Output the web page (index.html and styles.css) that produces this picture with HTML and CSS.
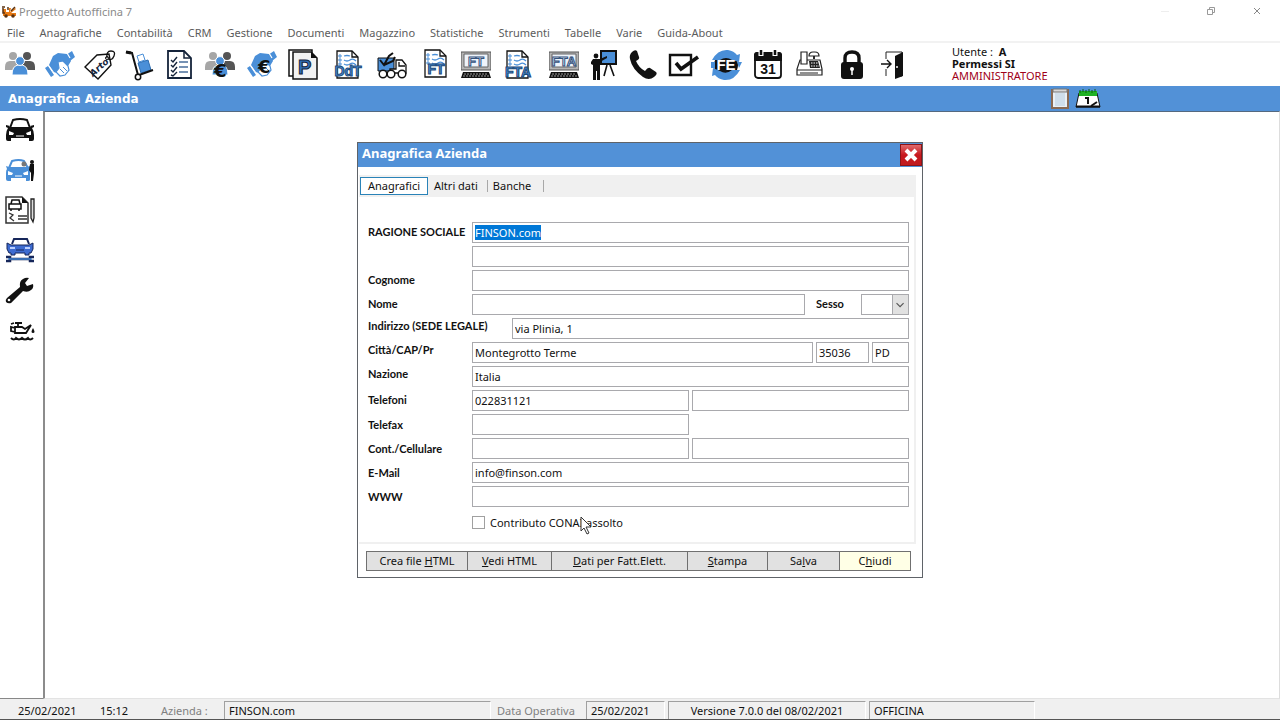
FILE: index.html
```html
<!DOCTYPE html>
<html lang="it">
<head>
    <meta charset="UTF-8">
    <title>Progetto Autofficina 7</title>
    <link rel="stylesheet" href="styles.css">
</head>
<body>

    <!-- Simboli usati da piu' icone -->
    <svg class="simboli" aria-hidden="true">
        <symbol id="persone" viewBox="0 0 30 30">
            <circle cx="8" cy="6" r="4" fill="#a6a6a6"/>
            <path d="M0 20v-3q0-6 5-6h5q3 0 3 4v5z" fill="#a6a6a6"/>
            <circle cx="22" cy="6" r="4" fill="#555"/>
            <path d="M30 20v-3q0-6-5-6h-5q-3 0-3 4v5z" fill="#555"/>
            <path d="M7 25q0-9 6-10h4q6 1 6 10z" fill="#4a8fd8" stroke="#fff"/>
            <circle cx="15" cy="11" r="4.4" fill="#4a8fd8" stroke="#fff"/>
        </symbol>
        <symbol id="mani" viewBox="0 0 30 30">
            <path d="M0 18l3-2 6 9-3 2zM21 5l6-4 3 6-5 4z" fill="#4a8fd8"/>
            <path d="M4 15l4-9 5-3 9 1 4 7-3 5v4l-3 4-4 1-3-2-5-1z" fill="#4a8fd8"/>
            <path d="M13 12l5-1 5 5 1 4-4 5-5 1-4-4 3-4z" fill="#fff" stroke="#4a8fd8" stroke-width="1.2"/>
            <path d="M15 19l4 5M18 17l4 5M22 3l3 5M4 16l5 7" fill="none" stroke="#fff" stroke-width="1.2"/>
            <path d="M15 19l4 4M18 17l4 4" stroke="#4a8fd8"/>
        </symbol>
        <symbol id="foglio" viewBox="0 0 30 30">
            <path d="M4 1h15l6 6v21H4z" fill="#fff" stroke="#111" stroke-width="1.3"/>
            <path d="M19 1v6h6" fill="none" stroke="#111" stroke-width="1.3"/>
            <path d="M6 5h2v2H6zM6 9h2v2H6zM6 13h2v2H6z" fill="none" stroke="#4a8fd8"/>
            <path d="M11 6q3-1 6 0M11 10q3 2 6 0t6 1M11 14q3 2 6 0t6 1" fill="none" stroke="#4a8fd8" stroke-width="1.3"/>
        </symbol>
        <symbol id="computer" viewBox="0 0 30 30">
            <path d="M0 2h30v18H0z" fill="#b4b4b4" stroke="#555"/>
            <path d="M3 4h24v13H3z" fill="#eef3fa" stroke="#666"/>
            <path d="M2 22h26l2 6H0z" fill="#111"/>
            <path d="M3 24h24M2 26h26" stroke="#999" stroke-dasharray="2 1"/>
        </symbol>
    </svg>

    <header class="titolo-app">
        <svg class="logo" viewBox="0 0 15 12">
            <path d="M1 3h3v3h3V2h2l-1 4 5-4 1 1-5 4h5v3H1z" fill="#e87a14"/>
            <path d="M0 1h3M1 2v5h2M9 5l4-4M6 1v3" fill="none" stroke="#5b3310" stroke-width="1.5"/>
            <circle cx="4" cy="10" r="1.8" fill="#5b3310"/><circle cx="11" cy="10" r="1.8" fill="#5b3310"/>
        </svg>
        <span>Progetto Autofficina 7</span>
        <div class="controlli">
            <button type="button" aria-label="Riduci"><svg viewBox="0 0 10 10"><path d="M1 5.500h8" stroke="#eee"/></svg></button>
            <button type="button" aria-label="Ripristina"><svg viewBox="0 0 10 10"><path d="M1.500 3.500h5v5h-5zM3.500 3V1.500h5v5H7" fill="none" stroke="#999"/></svg></button>
            <button type="button" aria-label="Chiudi programma"><svg viewBox="0 0 10 10"><path d="M2 2l6 6M8 2L2 8" stroke="#888"/></svg></button>
        </div>
    </header>

    <nav class="menu">
        <a href="#">File</a>
        <a href="#">Anagrafiche</a>
        <a href="#">Contabilità</a>
        <a href="#">CRM</a>
        <a href="#">Gestione</a>
        <a href="#">Documenti</a>
        <a href="#">Magazzino</a>
        <a href="#">Statistiche</a>
        <a href="#">Strumenti</a>
        <a href="#">Tabelle</a>
        <a href="#">Varie</a>
        <a href="#">Guida-About</a>
    </nav>

    <div class="barra">
        <button type="button" aria-label="Clienti"><svg viewBox="0 0 30 30"><use href="#persone" width="30" height="30"/></svg></button>
        <button type="button" aria-label="Fornitori"><svg viewBox="0 0 30 30"><use href="#mani" width="30" height="30"/></svg></button>
        <button type="button" aria-label="Articoli"><svg viewBox="0 0 30 30">
            <path d="M0 17L12 5l12-1 2 11-13 14z" fill="#fff" stroke="#111" stroke-width="1.4"/>
            <circle cx="22" cy="8" r="1.5" fill="#fff" stroke="#111"/>
            <path d="M22 8q-1-7 4-7t3 5-6 3" fill="none" stroke="#111" stroke-width="1.3"/>
            <text x="3" y="22" transform="rotate(-42 12 18)" class="scritta-tag">Arto</text>
        </svg></button>
        <button type="button" aria-label="Magazzino"><svg viewBox="0 0 30 30">
            <path d="M13 13l10-3 3 10-10 3z" fill="#4a8fd8" stroke="#2c6cb0"/>
            <path d="M12 6l6-2 2 6-6 2z" fill="#fff" stroke="#4a8fd8"/>
            <path d="M1 2l6 1 6 22M14 25l14-5" fill="none" stroke="#111" stroke-width="2"/>
            <path d="M1 2l5 1" stroke="#111" stroke-width="3"/>
            <circle cx="13" cy="27" r="2.700" fill="#fff" stroke="#111" stroke-width="1.500"/>
        </svg></button>
        <button type="button" aria-label="Elenco"><svg viewBox="0 0 30 30">
            <path d="M3 1h16l7 7v20H3z" fill="#fff" stroke="#14233a" stroke-width="1.800"/>
            <path d="M19 1v7h7" fill="none" stroke="#14233a" stroke-width="1.500"/>
            <path d="M6 10l2 2 4-5M6 15l2 2 4-5M6 20l2 2 4-5M6 25l2 1 4-4" fill="none" stroke="#14233a" stroke-width="1.400"/>
            <path d="M14 12h9M14 17h9M14 22h9" stroke="#4a6f9c" stroke-width="1.500"/>
        </svg></button>
        <button type="button" aria-label="Incassi clienti"><svg viewBox="0 0 30 30"><use href="#persone" width="30" height="30"/><circle cx="16" cy="21" r="6" fill="#4a8fd8"/><text x="9" y="27" class="euro">€</text></svg></button>
        <button type="button" class="dist-s" aria-label="Pagamenti fornitori"><svg viewBox="0 0 30 30"><use href="#mani" width="30" height="30"/><text x="11" y="23" class="euro">€</text></svg></button>
        <button type="button" class="dist-s" aria-label="Preventivi"><svg viewBox="0 0 30 30">
            <path d="M0 0h23v26H0z" fill="#fff" stroke="#111" stroke-width="1.500"/>
            <path d="M4 2h18l6 6v21H4z" fill="#f2f2f2" stroke="#111" stroke-width="1.500"/>
            <path d="M22 2v6h6z" fill="#111"/>
            <text x="9" y="24" class="lettera-p">P</text>
        </svg></button>
        <button type="button" class="dist-m" aria-label="DdT"><svg viewBox="0 0 30 30"><use href="#foglio" width="30" height="30"/><text x="15" y="26" class="sigla">DdT</text></svg></button>
        <button type="button" class="dist-m" aria-label="Mezzi"><svg viewBox="0 0 30 30">
            <path d="M1 8h16v13H1z" fill="#4a8fd8" stroke="#111"/>
            <path d="M19 10h6l4 5v8H13v-4h6zM22 12v4h6" fill="#fff" stroke="#111" stroke-width="1.300"/>
            <path d="M3 10l4 5 5-9 4-3M7 15l9-4 2-4" fill="none" stroke="#111" stroke-width="2"/>
            <circle cx="6" cy="24" r="3.800" fill="#fff" stroke="#111" stroke-width="1.500"/>
            <circle cx="14" cy="24" r="3.800" fill="#fff" stroke="#111" stroke-width="1.500"/>
            <circle cx="25" cy="24" r="3.800" fill="#fff" stroke="#111" stroke-width="1.500"/>
        </svg></button>
        <button type="button" class="dist-m" aria-label="Fattura"><svg viewBox="0 0 30 30"><use href="#foglio" y="-1" width="30" height="30"/><text x="15" y="24" class="sigla">FT</text></svg></button>
        <button type="button" aria-label="Fattura a video"><svg viewBox="0 0 30 30"><use href="#computer" width="30" height="30"/><text x="15" y="16" class="sigla chiara">FT</text></svg></button>
        <button type="button" class="dist-s" aria-label="Fattura accompagnatoria"><svg viewBox="0 0 30 30"><use href="#foglio" width="30" height="30"/><text x="15" y="27" class="sigla">FTA</text></svg></button>
        <button type="button" class="dist-l" aria-label="Fattura accompagnatoria a video"><svg viewBox="0 0 30 30"><use href="#computer" width="30" height="30"/><text x="15" y="16" class="sigla chiara">FTA</text></svg></button>
        <button type="button" aria-label="Presentazione"><svg viewBox="0 0 30 30">
            <path d="M12 1h15v13H12z" fill="#4a8fd8" stroke="#111" stroke-width="2"/>
            <path d="M18 15l-3 11M21 15l4 11" stroke="#111" stroke-width="1.600"/>
            <circle cx="7" cy="6" r="2.400" fill="#111"/>
            <path d="M4 9h7l7-3v2l-7 4v18H8v-9H7v9H4V15l-2-1v-2z" fill="#111"/>
        </svg></button>
        <button type="button" aria-label="Telefono"><svg viewBox="0 0 30 30">
            <path d="M3 2q3-3 5-1l2 6q1 2-3 4 3 7 9 10 3-4 5-3l6 4q2 2-2 5-5 4-11 0Q3 19 1 9q-1-4 2-7z" fill="#111"/>
        </svg></button>
        <button type="button" aria-label="Attività"><svg viewBox="0 0 30 30">
            <path d="M1 5h21v20H1z" fill="#fff" stroke="#111" stroke-width="2.400"/>
            <path d="M7 13l5 6L29 7" fill="none" stroke="#111" stroke-width="3.600"/>
        </svg></button>
        <button type="button" class="dist-s" aria-label="Fattura elettronica"><svg viewBox="0 0 30 30">
            <circle cx="15" cy="15" r="12" fill="#111"/>
            <path d="M1 10Q7-1 17 0q6 1 9 5l3-1-1 8-7-2q-6-4-12 0z" fill="#4a8fd8"/>
            <path d="M29 20q-6 11-16 10-6-1-9-5l-3 1 1-8 7 3q6 4 12-1z" fill="#4a8fd8"/>
            <path d="M0 12h4v6H0zM26 12h5l-3 6z" fill="#4a8fd8"/>
            <text x="15" y="20" class="fe">FE</text>
        </svg></button>
        <button type="button" class="dist-s" aria-label="Calendario"><svg viewBox="0 0 30 30">
            <rect x="2" y="3" width="26" height="25" rx="3" fill="#fff" stroke="#111" stroke-width="1.800"/>
            <path d="M1 11V5q0-3 3-3h22q3 0 3 3v6z" fill="#111"/>
            <path d="M8 0v6M22 0v6" stroke="#fff" stroke-width="5"/>
            <path d="M8 0v5M22 0v5" stroke="#111" stroke-width="2.500"/>
            <text x="15" y="24" class="giorno">31</text>
        </svg></button>
        <button type="button" class="dist-s" aria-label="Cassa"><svg viewBox="0 0 30 30">
            <path d="M5 10h20l2 9v6H2v-6z" fill="#fff" stroke="#222" stroke-width="1.200"/>
            <path d="M2 20h25M5 23h18" stroke="#222"/>
            <path d="M6 2h6v12H6z" fill="#fff" stroke="#222" stroke-width="1.200"/>
            <path d="M14 6q0-4 4-4h2q4 0 4 4z" fill="#fff" stroke="#222" stroke-width="1.200"/>
            <path d="M19 6v3" stroke="#222" stroke-width="2"/>
            <path d="M14 11h9l2 7H15z" fill="#222"/>
            <path d="M16 13h7M16 16h8" stroke="#fff" stroke-dasharray="1.500 1"/>
        </svg></button>
        <button type="button" class="dist-s" aria-label="Blocca"><svg viewBox="0 0 30 30">
            <path d="M8 14V8q0-6 7-6t7 6v6" fill="none" stroke="#111" stroke-width="3.400"/>
            <rect x="4" y="12" width="22" height="17" rx="3" fill="#111"/>
            <circle cx="15" cy="19" r="2" fill="#fff"/><path d="M15 19v6" stroke="#fff" stroke-width="1.500"/>
        </svg></button>
        <button type="button" class="dist-s" aria-label="Esci"><svg viewBox="0 0 30 30">
            <path d="M7 9V2h16v24h-5M7 19v7" fill="none" stroke="#222"/>
            <path d="M24 2v24l-8 3V6z" fill="#111"/>
            <path d="M2 14h9M8 10l4 4-4 4" fill="none" stroke="#111" stroke-width="1.400"/>
            <circle cx="18" cy="17" r="1" fill="#fff"/>
        </svg></button>
        <div class="utente">
            <div>Utente : &nbsp;<b>A</b></div>
            <div><b>Permessi SI</b></div>
            <div class="ruolo">AMMINISTRATORE</div>
        </div>
    </div>

    <div class="intestazione">
        <h1>Anagrafica Azienda</h1>
        <svg class="appunti" viewBox="0 0 18 21">
            <path d="M1 2h16v18H1z" fill="#eaf0f5" stroke="#8a6a52" stroke-width="2"/>
            <path d="M4 5h10v13H4z" fill="#cfdeea"/><path d="M2 1h14v3H2z" fill="#d8d8d8" stroke="#777"/>
        </svg>
        <svg class="agenda" viewBox="0 0 26 19">
            <path d="M4 4h18l3 14H1z" fill="#fff" stroke="#111"/><path d="M4 2h18v5H4z" fill="#1fb224"/>
            <path d="M5 1v3M8 0v3M11 1v3M14 0v3M17 1v3M20 0v3" stroke="#0b5c10"/>
            <path d="M10 9h3v6M16 17l6-4" fill="none" stroke="#111" stroke-width="2"/><path d="M1 17.500h24" stroke="#111" stroke-width="2"/>
        </svg>
    </div>

    <div class="corpo">
        <aside class="laterale">
            <button type="button" aria-label="Auto"><svg viewBox="0 0 30 30">
                <path d="M5 12L8 4q7-2 14 0l3 8" fill="#fff" stroke="#111" stroke-width="2"/>
                <path d="M1 9l4 1-1 1h22l-1-1 4-1v2l-2 1q2 3 2 7v4q0 2-2 2h-3v-3H6v3H3q-2 0-2-2v-4q0-4 2-7l-2-1z" fill="#111"/>
                <path d="M4 15l5 2-1 2H4zM26 15l-5 2 1 2h4z" fill="#fff"/><path d="M11 20h8" stroke="#fff"/>
            </svg></button>
            <button type="button" aria-label="Auto cliente"><svg viewBox="0 0 30 30">
                <path d="M4 12L7 5q7-2 12 0l4 7" fill="#fff" stroke="#4a8fd8" stroke-width="2"/>
                <path d="M1 10l3 1h18l3-1v14q0 1-2 1h-2v-3H6v3H3q-2 0-2-2v-6q0-3 1-4z" fill="#4a8fd8"/>
                <path d="M3 15l5 2-1 2H3zM23 15l-5 2 1 2h4z" fill="#fff"/><path d="M10 20h7" stroke="#fff"/>
                <circle cx="19" cy="8" r="2.500" fill="#777"/><circle cx="27" cy="6" r="2" fill="#111"/>
                <path d="M25 8h4v9l-1 8h-2v-8l-2-3z" fill="#111"/>
            </svg></button>
            <button type="button" aria-label="Scheda lavoro"><svg viewBox="0 0 30 30">
                <path d="M1 1h16l6 6v20H1z" fill="#fff" stroke="#333" stroke-width="1.500"/>
                <path d="M17 1v6h6z" fill="#111"/>
                <path d="M6 8l1-4h7l1 4M4 8h12v5H4zM6 13v2M14 13v2" fill="none" stroke="#111" stroke-width="1.500"/>
                <path d="M4 17l4 2-3 3 4 3M13 20h9M13 23h9" fill="none" stroke="#333" stroke-width="1.300"/>
                <path d="M26 3h3v19l-1 4-2-4z" fill="#ddd" stroke="#222" stroke-width="1.300"/>
            </svg></button>
            <button type="button" aria-label="Riparazioni"><svg viewBox="0 0 30 30">
                <path d="M7 8l2-5h13l2 5" fill="#fff" stroke="#16265a" stroke-width="2"/>
                <path d="M2 7l4 2h18l4-2v6l-2 4h-2v2h-4v-2H10v2H6v-2H4l-2-4z" fill="#3d6bd0" stroke="#16265a"/>
                <path d="M5 11h5v2H5zM20 11h5v2h-5z" fill="#bcd0ff"/><path d="M11 14h8" stroke="#16265a"/>
                <path d="M1 21h4v4H1M5 23h20M29 21h-4v4h4" fill="none" stroke="#16265a" stroke-width="2.500"/>
                <path d="M3 23h24" stroke="#4a8fd8" stroke-width="1.400"/>
            </svg></button>
            <button type="button" aria-label="Officina"><svg viewBox="0 0 30 30">
                <path d="M2 22L15 11q-1-6 3-8 3-2 6-1l-4 5 2 3 6-2q1 4-2 6-3 3-8 1L6 27q-3 1-5-1-1-2 1-4z" fill="#111"/>
                <circle cx="4" cy="24" r="1.300" fill="#fff"/>
            </svg></button>
            <button type="button" aria-label="Olio"><svg viewBox="0 0 30 30">
                <path d="M6 8l3-1M10 11h7l3 2 6-4-5 8H10zM13 11V7M10 7h7M10 12l-4-1v4l4 1" fill="none" stroke="#111" stroke-width="1.800"/>
                <path d="M28 12q3 5 0 5t0-5z" fill="#111"/>
                <path d="M6 22q3 3 5 0 3 3 6 0 3 3 6 0 2 3 5 0" fill="none" stroke="#111" stroke-width="2"/>
            </svg></button>
        </aside>

        <main class="lavoro">
            <section class="finestra">
                <header>
                    <h2>Anagrafica Azienda</h2>
                    <button type="button" class="chiudi-x" aria-label="Chiudi finestra"><svg viewBox="0 0 14 14"><path d="M2 2l10 10M12 2L2 12" stroke="#fff" stroke-width="4"/></svg></button>
                </header>

                <div class="pannello">
                    <div class="schede">
                        <button type="button" class="attiva">Anagrafici</button>
                        <button type="button">Altri dati</button>
                        <button type="button">Banche</button>
                    </div>

                    <form id="azienda-form">
                        <div class="riga alta"><label for="ragione">RAGIONE SOCIALE</label><input type="text" id="ragione" value="FINSON.com"></div>
                        <div class="riga"><label for="ragione2"></label><input type="text" id="ragione2"></div>
                        <div class="riga alta"><label for="cognome">Cognome</label><input type="text" id="cognome"></div>
                        <div class="riga alta">
                            <label for="nome">Nome</label><input type="text" id="nome">
                            <label for="sesso" class="breve">Sesso</label>
                            <div class="scelta">
                                <select id="sesso"><option></option><option>M</option><option>F</option></select>
                                <svg viewBox="0 0 17 19"><path d="M4 8l4 4 4-4" fill="none" stroke="#555" stroke-width="1.300"/></svg>
                            </div>
                        </div>
                        <div class="riga larga piu-alta"><label for="indirizzo">Indirizzo (SEDE LEGALE)</label><input type="text" id="indirizzo" value="via Plinia, 1"></div>
                        <div class="riga piu-alta">
                            <label for="citta">Città/CAP/Pr</label><input type="text" id="citta" value="Montegrotto Terme">
                            <input type="text" id="cap" class="cap" aria-label="CAP" value="35036">
                            <input type="text" id="pr" class="pr" aria-label="Provincia" value="PD">
                        </div>
                        <div class="riga piu-alta"><label for="nazione">Nazione</label><input type="text" id="nazione" value="Italia"></div>
                        <div class="riga alta"><label for="tel1">Telefoni</label><input type="text" id="tel1" value="022831121"><input type="text" id="tel2" aria-label="Telefono 2"></div>
                        <div class="riga"><label for="fax">Telefax</label><input type="text" id="fax"><span class="vuoto"></span></div>
                        <div class="riga"><label for="cell1">Cont./Cellulare</label><input type="text" id="cell1"><input type="text" id="cell2" aria-label="Cellulare 2"></div>
                        <div class="riga"><label for="email">E-Mail</label><input type="text" id="email" value="info@finson.com"></div>
                        <div class="riga"><label for="www">WWW</label><input type="text" id="www"></div>
                        <div class="spunta"><input type="checkbox" id="conai"><label for="conai">Contributo CONAI assolto</label></div>
                    </form>
                </div>

                <div class="pulsanti">
                    <button type="button" class="w-html">Crea file <u>H</u>TML</button>
                    <button type="button" class="w-vedi"><u>V</u>edi HTML</button>
                    <button type="button" class="w-dati"><u>D</u>ati per Fatt.Elett.</button>
                    <button type="button" class="w-stampa"><u>S</u>tampa</button>
                    <button type="button" class="w-breve">Sa<u>l</u>va</button>
                    <button type="button" class="w-breve giallo">C<u>h</u>iudi</button>
                </div>

                <svg class="puntatore" viewBox="0 0 12 19"><path d="M1 1v14l3-3 3 6 2-1-3-6h5z" fill="#fff" stroke="#333"/></svg>
            </section>
        </main>
    </div>

    <footer class="stato">
        <span class="data">25/02/2021</span>
        <span class="ora">15:12</span>
        <span class="voce azienda">Azienda :</span>
        <span class="riquadro r-azienda">FINSON.com</span>
        <span class="voce">Data Operativa</span>
        <span class="riquadro r-data">25/02/2021</span>
        <span class="riquadro r-versione">Versione 7.0.0 del 08/02/2021</span>
        <span class="riquadro r-reparto">OFFICINA</span>
    </footer>

    <script>
        const ragione = document.getElementById('ragione');
        ragione.focus();
        ragione.select();
    </script>

</body>
</html>
```
FILE: styles.css
```css
* {
    box-sizing: border-box;
}

body {
    font-family: "Noto Sans", "Open Sans", sans-serif;
    font-size: 11px;
    background-color: #fff;
    color: #111;
    margin: 0;
    height: 100vh;
    display: flex;
    flex-direction: column;
    overflow: hidden;
}

button {
    font: inherit;
    color: inherit;
    padding: 0;
    border: none;
    background: none;
}

.simboli {
    display: none;
}

/* Barra del titolo */
.titolo-app {
    display: flex;
    align-items: center;
    height: 23px;
    padding-left: 2px;
    gap: 2px;
    color: #8a8a8a;
}

.logo {
    width: 15px;
    height: 12px;
}

.controlli {
    display: flex;
    margin-left: auto;
}

.controlli button {
    width: 46px;
    height: 23px;
}

.controlli svg {
    width: 10px;
    height: 10px;
}

/* Menu */
.menu {
    display: flex;
    align-items: center;
    height: 20px;
    padding: 0 7px;
    gap: 15px;
    border-bottom: 2px solid #f2f2f2;
}

.menu a {
    color: #5c5c5c;
    text-decoration: none;
}

/* Barra delle icone */
.barra {
    display: flex;
    align-items: center;
    height: 43px;
}

.barra button {
    width: 40px;
    height: 30px;
    flex: none;
}

.barra button svg,
.laterale button svg {
    display: block;
    width: 30px;
    height: 30px;
    margin: 0 auto;
    overflow: visible;
}

.barra .dist-s {
    margin-left: 2px;
}

.barra .dist-m {
    margin-left: 4px;
}

.barra .dist-l {
    margin-left: 6px;
}

.scritta-tag {
    font: italic bold 9px "DejaVu Sans", sans-serif;
    fill: #14233a;
}

.euro {
    font: bold 18px "DejaVu Sans", sans-serif;
    fill: #111;
}

.lettera-p {
    font: bold 20px "Liberation Sans", sans-serif;
    fill: #2f6fb8;
    stroke: #14233a;
}

.sigla {
    font: bold 14px "Liberation Sans", sans-serif;
    text-anchor: middle;
    fill: #4a8fd8;
    stroke: #1d4878;
    stroke-width: 1px;
}

.sigla.chiara {
    font-size: 13px;
    fill: #dfe8f5;
    stroke: #35527c;
}

.fe {
    font: bold 15px "Liberation Sans", sans-serif;
    text-anchor: middle;
    fill: #fff;
}

.giorno {
    font: bold 14px "Liberation Sans", sans-serif;
    text-anchor: middle;
    fill: #111;
}

.utente {
    margin-left: 38px;
    padding-bottom: 2px;
    line-height: 12px;
}

.ruolo {
    color: #a00018;
}

.intestazione {
    display: flex;
    align-items: center;
    gap: 6px;
    height: 25px;
    padding: 0 179px 0 8px;
    background-color: #5291d7;
    color: #fff;
}

.intestazione h1 {
    margin: 0 auto 0 0;
    font: bold 12px "DejaVu Sans", sans-serif;
}

.appunti {
    width: 18px;
    height: 21px;
}

.agenda {
    width: 26px;
    height: 19px;
}

/* Corpo */
.corpo {
    display: flex;
    flex: 1;
    min-height: 0;
}

.laterale {
    width: 43px;
    border-bottom: 1px solid #888;
}

.laterale button {
    display: block;
    width: 40px;
    height: 40px;
}

.lavoro {
    position: relative;
    flex: 1;
    border-left: 2px solid #8c8c8c;
    border-top: 1px solid #55697f;
    border-right: 1px solid #ddd;
    border-bottom: 1px solid #e3e3e3;
}

/* Finestra */
.finestra {
    position: absolute;
    left: 312px;
    top: 30px;
    width: 566px;
    border: 1px solid #5f6368;
    background-color: #fff;
}

.finestra header {
    display: flex;
    justify-content: space-between;
    height: 24px;
    padding-left: 4px;
    background-color: #5291d7;
    color: #fff;
}

.finestra h2 {
    margin: 0;
    font-size: 13px;
    line-height: 21px;
}

.chiudi-x {
    width: 22px;
    height: 22px;
    margin-top: 1px;
    border: 1px solid #8b1418;
    background: linear-gradient(#e06a6c, #c8181e 50%, #c01a1e);
}

.chiudi-x svg {
    display: block;
    width: 14px;
    height: 14px;
    margin: 0 auto;
}

.pannello {
    margin: 8px 6px 0 1px;
    border-right: 2px solid #f0f0f0;
    border-bottom: 2px solid #f0f0f0;
}

.schede {
    display: flex;
    height: 22px;
    padding: 2px 0 2px 1px;
    background-color: #f0f0f0;
}

.schede button {
    height: 12px;
    margin-top: 3px;
    padding: 0 12px 0 5px;
    border-right: 1px solid #a8a8a8;
    line-height: 12px;
}

.schede button:nth-child(2) {
    padding: 0 9px 0 6px;
}

.schede .attiva {
    height: 18px;
    margin-top: 0;
    padding: 0 7px;
    border: 1px solid #2a83b8;
    background-color: #fff;
}

#azienda-form {
    display: flex;
    flex-direction: column;
    gap: 3px;
    padding: 25px 5px 11px 9px;
}

.riga {
    display: flex;
    align-items: center;
    gap: 3px;
}

.riga label {
    flex: none;
    width: 101px;
    font: bold 11px/15px Lato, "Open Sans", sans-serif;
}

.riga.alta label {
    padding-bottom: 3px;
}

.riga.piu-alta label {
    padding-bottom: 6px;
}

.riga.larga label {
    width: 141px;
}

.riga .breve {
    width: 42px;
    margin-left: 8px;
}

.riga input {
    flex: 1;
    min-width: 0;
    height: 21px;
    padding: 0 2px 1px;
    border: 1px solid #a9a9ad;
    outline: none;
    background-color: #fff;
    color: #111;
    font: inherit;
}

.riga input::selection {
    background-color: #0078d7;
    color: #fff;
}

/* stessa base dei campi, cosi' le meta' restano uguali */
.riga .vuoto {
    flex: 1;
    padding: 0 3px;
}

.riga .cap {
    flex: none;
    width: 53px;
}

.riga .pr {
    flex: none;
    width: 37px;
}

.scelta {
    position: relative;
    width: 48px;
    height: 21px;
}

.scelta select {
    width: 100%;
    height: 100%;
    border: 1px solid #a9a9ad;
    border-radius: 0;
    background-color: #fff;
    appearance: none;
}

.scelta svg {
    position: absolute;
    right: 0;
    top: 0;
    width: 17px;
    height: 21px;
    border: 1px solid #a9a9ad;
    background-color: #e1e1e1;
    pointer-events: none;
}

.spunta {
    display: flex;
    align-items: center;
    gap: 5px;
    height: 18px;
    margin: 3px 0 0 104px;
}

.spunta input {
    appearance: none;
    width: 13px;
    height: 13px;
    margin: 0;
    border: 1px solid #a0a0a0;
    background-color: #fff;
}

.pulsanti {
    display: flex;
    margin: 7px 8px 6px;
}

.pulsanti button {
    height: 20px;
    padding-bottom: 1px;
    border: 1px solid #707070;
    border-right-width: 0;
    background-color: #e1e1e1;
}

.pulsanti button:last-child {
    border-right-width: 1px;
}

.pulsanti .giallo {
    background-color: #ffffe6;
}

.w-html { width: 101px; }
.w-vedi { width: 84px; }
.w-dati { width: 136px; }
.w-stampa { width: 80px; }
.w-breve { width: 72px; }

.puntatore {
    position: absolute;
    left: 222px;
    top: 373px;
    width: 12px;
    height: 19px;
}

/* Barra di stato */
.stato {
    display: flex;
    align-items: flex-end;
    height: 21px;
    padding-left: 18px;
    background-color: #f0f0f0;
    border-bottom: 1px solid #555;
    line-height: 17px;
    white-space: nowrap;
}

.data {
    width: 82px;
}

.ora {
    width: 61px;
}

.voce {
    width: 89px;
    color: #808080;
}

.voce.azienda {
    width: 63px;
}

.riquadro {
    padding-left: 4px;
    border-top: 1px solid #a0a0a0;
    border-left: 1px solid #a0a0a0;
    border-right: 1px solid #fff;
}

.r-azienda {
    width: 267px;
    margin-right: 6px;
}

.r-data {
    width: 79px;
    margin-right: 3px;
}

.r-versione {
    width: 198px;
    margin-right: 3px;
    padding-left: 0;
    text-align: center;
}

.r-reparto {
    width: 166px;
}
```
